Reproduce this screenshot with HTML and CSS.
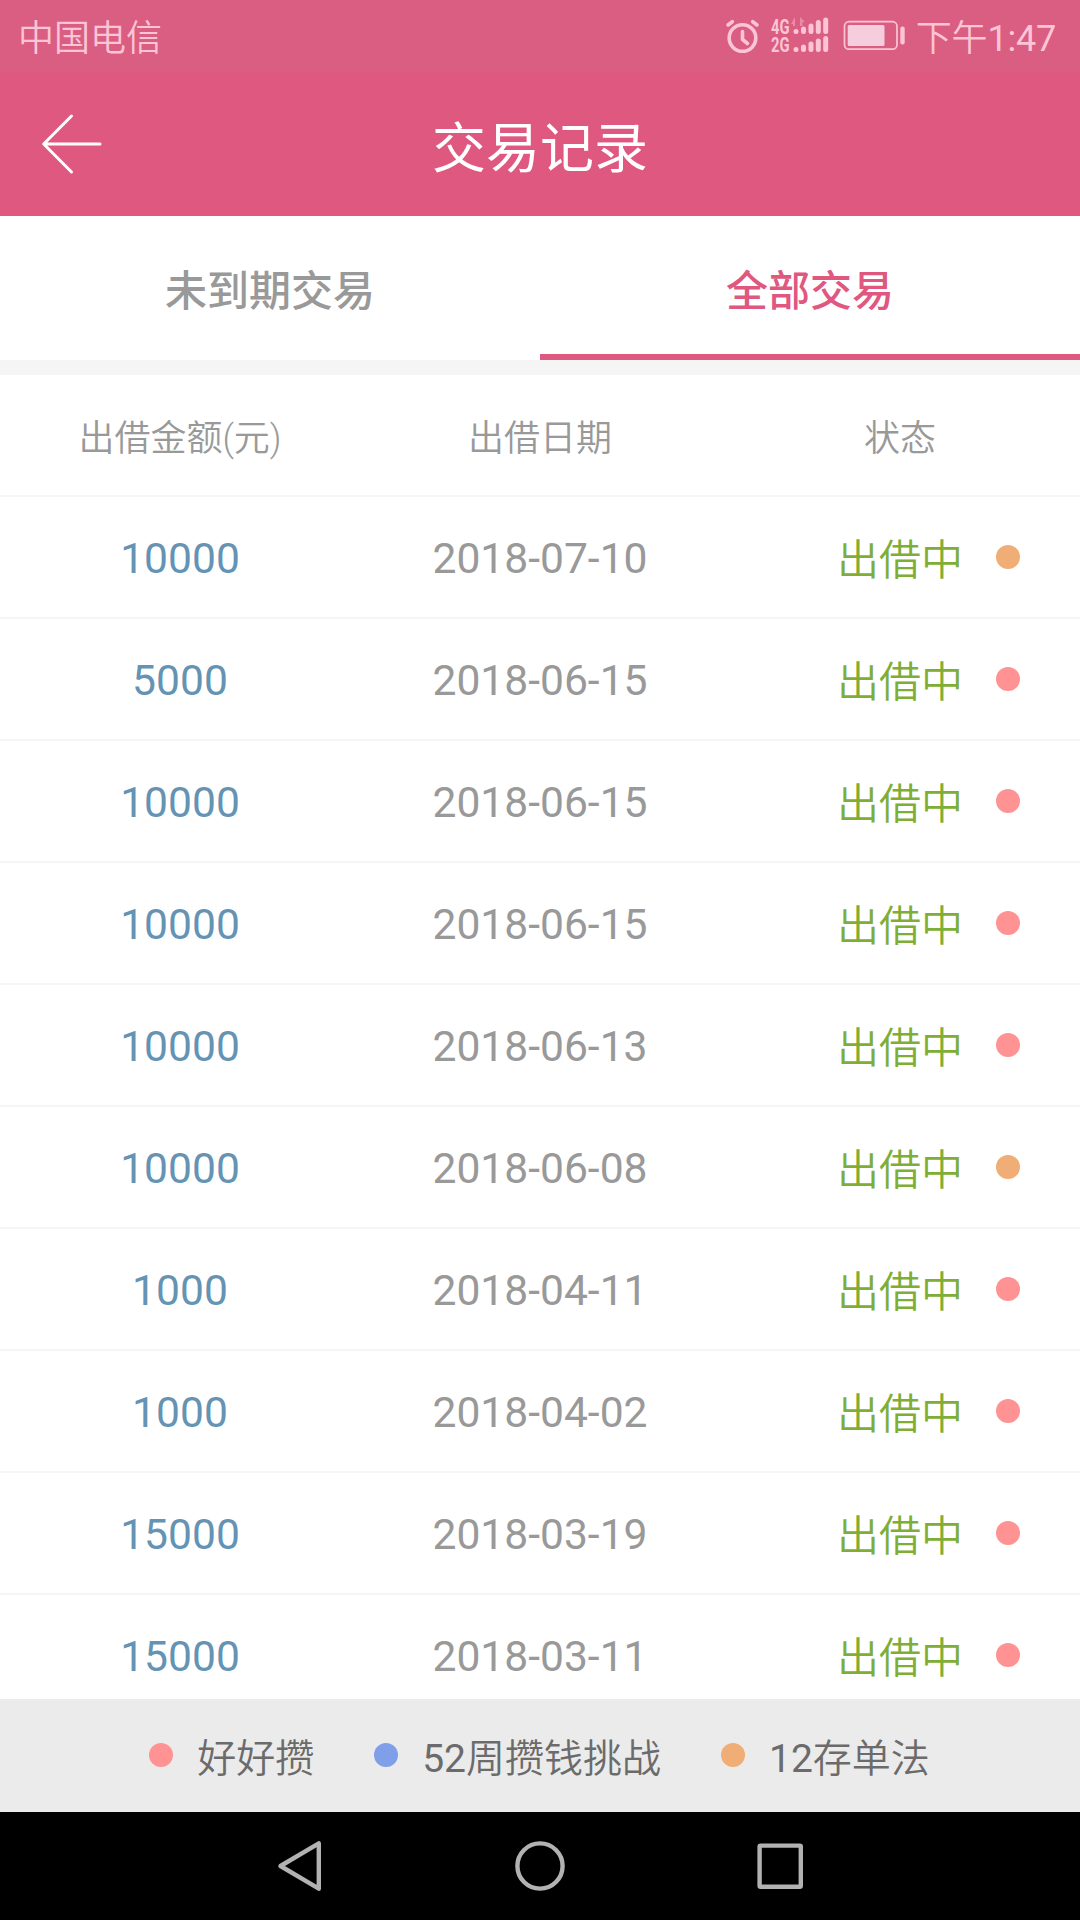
FILE: index.html
```html
<!DOCTYPE html>
<html lang="zh-CN">
<head>
<meta charset="utf-8">
<title>交易记录</title>
<link rel="stylesheet" href="styles.css">
</head>
<body>
<div class="screen">
  <div class="status-bar">
    <span class="carrier">中国电信</span>
    <svg class="status-icons" width="184" height="72" viewBox="724 0 184 72">
      <g fill="none" stroke="#fcc5d6" stroke-width="3.6" stroke-linecap="round" stroke-linejoin="round">
        <circle cx="742.5" cy="38" r="13.3"/>
        <path d="M742.5 31.5V39.5L747.5 43.5M728 25L732.3 21.7M752.7 21.7L757 25"/>
      </g>
      <g class="network" fill="#fcc5d6">
        <text x="771" y="34" textLength="18.5" lengthAdjust="spacingAndGlyphs">4G</text>
        <text x="771" y="52" textLength="18.5" lengthAdjust="spacingAndGlyphs">2G</text>
      </g>
      <path d="M791 24L795 17V26H793V24ZM800 26V17L805 22H802.5V26Z" fill="#e98aa8"/>
      <g stroke="#fcc5d6" stroke-width="5" stroke-linecap="round">
        <path d="M796 31.4V31.5M803.5 29V31.5M811 26V31.5M818.3 22.5V31.5M825.7 20V31.5"/>
        <path d="M796 49.4V49.5M803.5 47V49.5M811 44V49.5M818.3 41V49.5M825.7 38.5V49.5"/>
      </g>
      <rect x="844.5" y="21.7" width="52.5" height="27.5" rx="4.5" fill="none" stroke="#fcc5d6" stroke-width="1.7"/>
      <rect x="847.7" y="25" width="36.8" height="21" rx="1.5" fill="#f5cddd"/>
      <rect x="900.3" y="26.5" width="4.4" height="18" rx="2" fill="#fcc5d6"/>
    </svg>
    <span class="clock"><span class="cjk">下午</span>1:47</span>
  </div>
  <header class="title-bar">
    <svg class="back" width="62" height="62" viewBox="41 113 62 62" fill="none" stroke="#fff" stroke-width="3" stroke-linecap="round" stroke-linejoin="round">
      <path d="M100 144H44M71.5 116L43.7 144L71.5 172"/>
    </svg>
    <h1>交易记录</h1>
  </header>
  <nav class="tabs">
    <div class="tab">未到期交易</div>
    <div class="tab active">全部交易</div>
  </nav>
  <main class="list">
    <div class="row head"><span>出借金额(元)</span><span>出借日期</span><span>状态</span></div>
    <div class="row"><span class="amount">10000</span><span class="date">2018-07-10</span><span class="state">出借中<i class="dot orange"></i></span></div>
    <div class="row"><span class="amount">5000</span><span class="date">2018-06-15</span><span class="state">出借中<i class="dot pink"></i></span></div>
    <div class="row"><span class="amount">10000</span><span class="date">2018-06-15</span><span class="state">出借中<i class="dot pink"></i></span></div>
    <div class="row"><span class="amount">10000</span><span class="date">2018-06-15</span><span class="state">出借中<i class="dot pink"></i></span></div>
    <div class="row"><span class="amount">10000</span><span class="date">2018-06-13</span><span class="state">出借中<i class="dot pink"></i></span></div>
    <div class="row"><span class="amount">10000</span><span class="date">2018-06-08</span><span class="state">出借中<i class="dot orange"></i></span></div>
    <div class="row"><span class="amount">1000</span><span class="date">2018-04-11</span><span class="state">出借中<i class="dot pink"></i></span></div>
    <div class="row"><span class="amount">1000</span><span class="date">2018-04-02</span><span class="state">出借中<i class="dot pink"></i></span></div>
    <div class="row"><span class="amount">15000</span><span class="date">2018-03-19</span><span class="state">出借中<i class="dot pink"></i></span></div>
    <div class="row"><span class="amount">15000</span><span class="date">2018-03-11</span><span class="state">出借中<i class="dot pink"></i></span></div>
  </main>
  <footer class="legend">
    <div class="key"><i class="dot pink"></i><span class="cjk">好好攒</span></div>
    <div class="key"><i class="dot blue"></i><span>52<span class="cjk">周攒钱挑战</span></span></div>
    <div class="key"><i class="dot orange"></i><span>12<span class="cjk">存单法</span></span></div>
  </footer>
  <div class="system-nav">
    <svg width="540" height="108" viewBox="270 1812 540 108" fill="none" stroke="#b2b2b2" stroke-width="4.4" stroke-linejoin="round">
      <path d="M280.5 1866L318.8 1843.3V1888.7Z"/>
      <circle cx="540" cy="1866" r="22.6"/>
      <rect x="759.6" y="1845.6" width="41.2" height="41.2" rx="1"/>
    </svg>
  </div>
</div>
</body>
</html>
```
FILE: styles.css
```css
* {
  box-sizing: border-box;
}

body {
  margin: 0;
  font-family: Roboto, "Noto Sans CJK SC", sans-serif;
  font-weight: 400;
  color: #999;
  background: #fff;
}

.cjk {
  font-weight: 350;
}

.screen {
  display: flex;
  flex-direction: column;
  width: 1080px;
  height: 1920px;
  overflow: hidden;
}

.status-bar {
  display: flex;
  align-items: center;
  flex: none;
  height: 72px;
  padding: 0 24px 0 18px;
  background: #da5d82;
  color: #fcc5d6;
  font-size: 36px;
  line-height: 72px;
}

.carrier,
.clock {
  padding-top: 5px;
}

.carrier {
  font-weight: 350;
}

.clock {
  letter-spacing: -0.2px;
}

.status-icons {
  margin-left: auto;
  margin-right: 8px;
}

.network text {
  font-family: Roboto, sans-serif;
  font-size: 20px;
  font-weight: 700;
}

.title-bar {
  display: grid;
  grid-template-columns: 62px 1fr 62px;
  align-items: center;
  flex: none;
  height: 144px;
  padding: 0 41px;
  background: #df5880;
  color: #fff;
}

.title-bar h1 {
  margin: 0;
  padding-top: 12px;
  font-size: 54px;
  font-weight: 400;
  line-height: 80px;
  text-align: center;
}

.tabs {
  display: grid;
  grid-template-columns: 1fr 1fr;
  flex: none;
  height: 159px;
  border-bottom: 15px solid #f5f5f5;
}

.tab {
  height: 144px;
  padding-top: 6px;
  font-size: 42px;
  font-weight: 500;
  line-height: 140px;
  text-align: center;
}

.tab.active {
  border-bottom: 6px solid #df5880;
  color: #df5880;
}

.list {
  flex: 1;
  min-height: 0;
  overflow: hidden;
}

.row {
  display: grid;
  grid-template-columns: repeat(3, 1fr);
  height: 122px;
  border-bottom: 2px solid #f5f5f5;
  font-size: 42.6px;
  line-height: 122px;
  text-align: center;
}

.row.head {
  font-size: 36px;
  font-weight: 350;
  line-height: 128px;
}

.amount {
  color: #6493b3;
}

.state {
  position: relative;
  color: #7fae37;
  font-size: 42px;
  font-weight: 350;
  line-height: 127px;
}

.dot {
  display: block;
  width: 24px;
  height: 24px;
  border-radius: 50%;
}

.state .dot {
  position: absolute;
  top: 48px;
  right: 60px;
}

.pink {
  background: #ff9292;
}

.orange {
  background: #f1ad76;
}

.blue {
  background: #809fe9;
}

.legend {
  display: flex;
  justify-content: center;
  gap: 60px;
  flex: none;
  height: 113px;
  padding-right: 1px;
  background: #ebebeb;
  color: #6b6b6b;
  font-size: 39px;
  line-height: 121px;
}

.key {
  display: flex;
  gap: 24px;
}

.key .dot {
  margin-top: 44px;
}

.system-nav {
  display: flex;
  justify-content: center;
  flex: none;
  height: 108px;
  background: #000;
}
```
